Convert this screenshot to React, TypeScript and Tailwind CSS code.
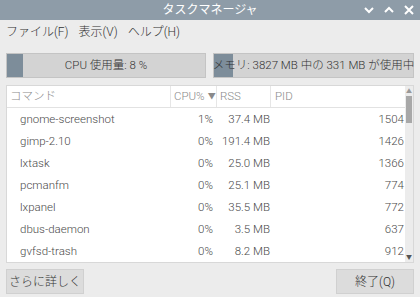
import React from 'react'

const rows = [
  { cmd: 'gnome-screenshot', cpu: '1%', rss: '37.4 MB', pid: '1504' },
  { cmd: 'gimp-2.10', cpu: '0%', rss: '191.4 MB', pid: '1426' },
  { cmd: 'lxtask', cpu: '0%', rss: '25.0 MB', pid: '1366' },
  { cmd: 'pcmanfm', cpu: '0%', rss: '25.1 MB', pid: '774' },
  { cmd: 'lxpanel', cpu: '0%', rss: '35.5 MB', pid: '772' },
  { cmd: 'dbus-daemon', cpu: '0%', rss: '3.5 MB', pid: '637' },
  { cmd: 'gvfsd-trash', cpu: '0%', rss: '8.2 MB', pid: '912' },
]

const font = { fontFamily: '"Roboto", "Noto Sans CJK JP", sans-serif' }

export default function App() {
  return (
    <div className="w-[420px] h-[297px] bg-[#ececec] flex flex-col overflow-hidden text-[11.5px] font-light text-[#444]" style={font}>
      {/* Title bar */}
      <div className="h-[20px] bg-[#8e9ca8] flex items-center relative">
        <div className="flex-1 text-center text-white text-[12px] font-normal">タスクマネージャ</div>
        <div className="absolute right-[6px] top-[5px] flex gap-[10px] text-white">
          <svg width="10" height="10" viewBox="0 0 10 10"><path d="M1 3 L5 7 L9 3" stroke="white" strokeWidth="2" fill="none" /></svg>
          <svg width="10" height="10" viewBox="0 0 10 10"><path d="M1 7 L5 3 L9 7" stroke="white" strokeWidth="2" fill="none" /></svg>
          <svg width="10" height="10" viewBox="0 0 10 10"><path d="M1 1 L9 9 M9 1 L1 9" stroke="white" strokeWidth="2" fill="none" /></svg>
        </div>
      </div>

      {/* Menu */}
      <div className="h-[24px] flex items-center px-[6px] gap-[10px] text-[#333] text-[12px]">
        <span>ファイル(F)</span>
        <span>表示(V)</span>
        <span>ヘルプ(H)</span>
      </div>

      {/* Usage bars */}
      <div className="flex gap-[7px] px-[6px] mt-[9px] h-[25px]">
        <div className="w-[201px] relative bg-[#d3d3d3] border border-[#c4c4c4] flex items-center justify-center text-[#333]">
          <div className="absolute left-0 top-0 bottom-0 w-[16px] bg-[#7d8d9a]" />
          <span className="relative">CPU 使用量: 8 %</span>
        </div>
        <div className="w-[201px] relative bg-[#d3d3d3] border border-[#c4c4c4] flex items-center justify-center text-[#333]">
          <div className="absolute left-0 top-0 bottom-0 w-[19px] bg-[#7d8d9a]" />
          <span className="relative whitespace-nowrap">メモリ: 3827 MB 中の 331 MB が使用中</span>
        </div>
      </div>

      {/* Process list */}
      <div className="mx-[6px] mt-[7px] h-[178px] bg-white border border-[#d8d8d8] flex">
        <div className="flex-1 flex flex-col">
          <div className="h-[22px] flex items-center text-[#8a8a8a] border-b border-[#e2e2e2]">
            <div className="w-[163px] pl-[3px]">コマンド</div>
            <div className="w-[46px] h-full flex items-center pl-[3px] border-l border-[#e6e6e6]">
              CPU%<span className="text-[8px] ml-[3px]">▼</span>
            </div>
            <div className="w-[54px] h-full flex items-center pl-[3px] border-l border-[#e6e6e6]">RSS</div>
            <div className="flex-1 h-full flex items-center pl-[4px] border-l border-[#e6e6e6]">PID</div>
          </div>
          {rows.map((r) => (
            <div key={r.pid} className="h-[22px] pt-[2px] flex items-center text-[#4a4a4a]">
              <div className="w-[163px] pl-[13px]">{r.cmd}</div>
              <div className="w-[43px] text-right">{r.cpu}</div>
              <div className="w-[57px] text-right">{r.rss}</div>
              <div className="flex-1 text-right pr-[1px]">{r.pid}</div>
            </div>
          ))}
        </div>
        {/* Scrollbar */}
        <div className="w-[8px] bg-[#ececec] flex flex-col items-center">
          <span className="text-[6px] text-[#999] leading-[8px] mt-[1px]">▲</span>
          <div className="w-[6px] h-[27px] bg-[#a8a8a8] mt-[1px]" />
          <div className="flex-1" />
          <span className="text-[6px] text-[#555] leading-[8px] mb-[1px]">▼</span>
        </div>
      </div>

      {/* Buttons */}
      <div className="flex justify-between px-[6px] mt-[6px]">
        <button className="w-[78px] h-[25px] bg-[#dcdcdc] border border-[#d0d0d0] text-[#333] text-[12px]">さらに詳しく</button>
        <button className="w-[78px] h-[25px] bg-[#dcdcdc] border border-[#d0d0d0] text-[#333] text-[12px]">終了(Q)</button>
      </div>
    </div>
  )
}
